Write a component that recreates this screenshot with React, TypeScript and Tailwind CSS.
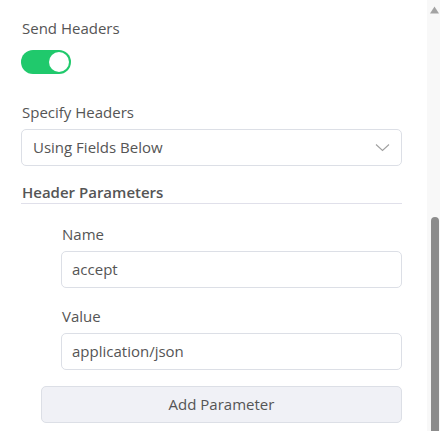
import React from "react";

export default function App() {
  const font = { fontFamily: '"Open Sans", "Noto Sans", sans-serif' };
  return (
    <div className="flex w-[440px] h-[431px] overflow-hidden bg-white text-[#555555]" style={font}>
      <div className="flex-1 pl-[21px] pr-[25px] pt-[18px]">
        <div className="text-[15px] leading-[20px] pl-[1px]">Send Headers</div>
        <div className="mt-[12px] w-[50px] h-[24px] rounded-full bg-[#20c96c] flex items-center justify-end pr-[2px]">
          <div className="w-[20px] h-[20px] rounded-full bg-white" />
        </div>
        <div className="mt-[28px] text-[15px] leading-[20px] pl-[1px]">Specify Headers</div>
        <div className="mt-[7px] h-[37px] border border-[#dcdfe6] rounded-[5px] flex items-center justify-between pl-[11px] pr-[11px]">
          <span className="text-[15px]">Using Fields Below</span>
          <svg width="15" height="9" viewBox="0 0 15 9" fill="none">
            <path d="M1 1.5 L7.5 7.5 L14 1.5" stroke="#a0a0a0" strokeWidth="1.1" />
          </svg>
        </div>
        <div className="mt-[16px] text-[15px] leading-[20px] font-semibold pl-[1px] pb-[1px] border-b border-[#e0e0ea]">
          Header Parameters
        </div>
        <div className="pl-[20px]">
          <div className="pl-[20px]">
            <div className="mt-[20px] text-[15px] leading-[20px] pl-[1px]">Name</div>
            <div className="mt-[7px] h-[37px] border border-[#dcdfe6] rounded-[5px] flex items-center pl-[10px]">
              <span className="text-[15px]">accept</span>
            </div>
            <div className="mt-[18px] text-[15px] leading-[20px] pl-[1px]">Value</div>
            <div className="mt-[7px] h-[37px] border border-[#dcdfe6] rounded-[5px] flex items-center pl-[10px]">
              <span className="text-[15px]">application/json</span>
            </div>
          </div>
          <div className="mt-[16px] h-[37px] border border-[#dcdfe6] bg-[#f0f1f6] rounded-[5px] flex items-center justify-center">
            <span className="text-[15px]">Add Parameter</span>
          </div>
        </div>
      </div>
      <div className="w-[13px] h-full bg-[#f8f8f8] flex flex-col items-center">
        <svg width="13" height="16" viewBox="0 0 13 16" className="shrink-0">
          <path d="M3 13.5 L7.5 6.5 L12 13.5 Z" fill="#a3a3a3" />
        </svg>
        <div className="flex-1" />
        <div className="w-[8px] h-[214px] ml-[2px] bg-[#8c8c8c] rounded-t-[4px]" />
      </div>
    </div>
  );
}
